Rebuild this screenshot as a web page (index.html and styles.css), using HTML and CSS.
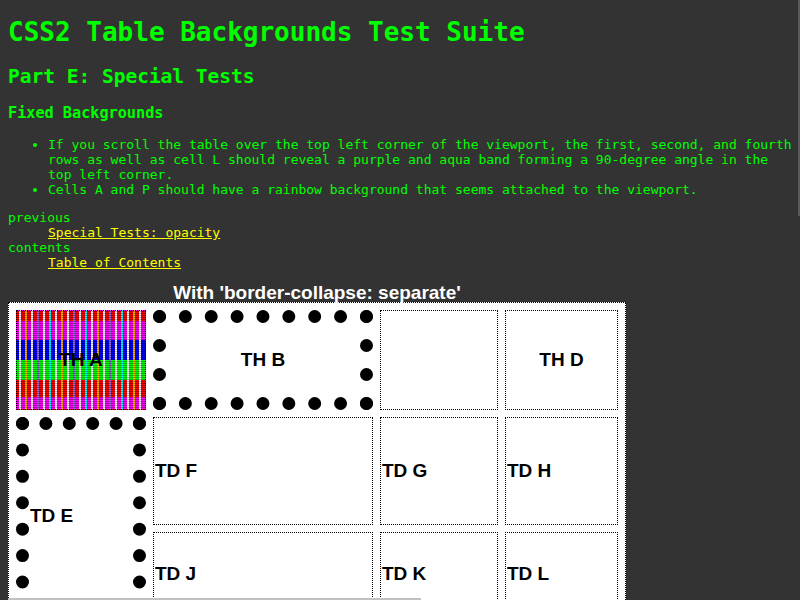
FILE: index.html
```html
<!DOCTYPE html>
<html>
<head>
<meta charset="utf-8">
<title>CSS2 Table Backgrounds Test Suite: Part E</title>
<link rel="stylesheet" href="styles.css">
</head>
<body>
<h1>CSS2 Table Backgrounds Test Suite</h1>
<h2>Part E: Special Tests</h2>
<h3>Fixed Backgrounds</h3>
<ul>
<li>If you scroll the table over the top left corner of the viewport, the first, second, and fourth rows as well as cell L should reveal a purple and aqua band forming a 90-degree angle in the top left corner.</li>
<li>Cells A and P should have a rainbow background that seems attached to the viewport.</li>
</ul>
<dl>
<dt>previous</dt>
<dd><a href="#">Special Tests: opacity</a></dd>
<dt>contents</dt>
<dd><a href="#">Table of Contents</a></dd>
</dl>
<table class="test">
<caption>With 'border-collapse: separate'</caption>
<tr class="r1">
<th class="a rainbow">TH A</th>
<th class="b thick">TH B</th>
<th class="c"></th>
<th class="d">TH D</th>
</tr>
<tr class="r2">
<td class="e thick" rowspan="2">TD E</td>
<td>TD F</td>
<td>TD G</td>
<td>TD H</td>
</tr>
<tr class="r3">
<td>TD J</td>
<td>TD K</td>
<td>TD L</td>
</tr>
<tr class="r4">
<td>TD M</td>
<td>TD N</td>
<td>TD O</td>
<td class="rainbow">TD P</td>
</tr>
</table>
<div class="vscroll"></div>
<div class="hscroll"></div>
</body>
</html>
```
FILE: styles.css
```css
html {
  overflow: hidden;
  background: #333333;
}
body {
  margin: 0 8px 8px;
  padding: 0;
  background: #333333;
  color: #00ff00;
  font-family: "DejaVu Sans Mono", monospace;
  font-size: 13px;
}
h1 { font-size: 26px; margin: 17px 0 18px; }
h2 { font-size: 19.5px; margin: 16px 0; }
h3 { font-size: 15.2px; margin: 15px 0; }
ul { margin: 13px 0; padding-left: 40px; }
dl { margin: 13px 0; }
dd { margin-left: 40px; }
a { color: #ffff00; text-decoration: underline; }

table.test {
  background: #ffffff;
  border: 1px dotted #000000;
  border-spacing: 7px;
  font-family: "Liberation Sans", Arial, sans-serif;
  font-size: 19px;
  font-weight: bold;
  color: #000000;
}
table.test caption {
  color: #ffffff;
  font-weight: bold;
  line-height: 19px;
}
table.test th,
table.test td {
  box-sizing: border-box;
  border: 1px dotted #000000;
  padding: 1px;
}
table.test td { text-align: left; }
table.test .thick { border: 13px dotted #000000; }
.r1 { height: 100px; }
.r2 { height: 108px; }
.r3 { height: 83px; }
.r4 { height: 100px; }
.a { width: 130px; }
.b { width: 220px; }
.c { width: 118px; }
.d { width: 113px; }
.rainbow {
  background:
    repeating-linear-gradient(to bottom, rgba(0,0,0,0.3) 0 1px, transparent 1px 2px),
    repeating-linear-gradient(to right,
      transparent 0 2px, #ffffff 2px 4px,
      transparent 4px 8px, #ffb000 8px 10px,
      transparent 10px 14px, #ffffff 14px 16px,
      transparent 16px 20px, #8c6cd0 20px 22px,
      transparent 22px 26px, #ffffff 26px 28px,
      transparent 28px 32px, #00ffff 32px 34px,
      transparent 34px 36px),
    linear-gradient(to bottom,
      #ff0000 0 10%, #ff00ff 10% 30%, #0000ff 30% 50%,
      #00ff00 50% 70%, #ff0000 70% 88%, #ff00ff 88% 100%);
}
.vscroll {
  position: fixed;
  right: 0;
  top: 0;
  width: 2px;
  height: 216px;
  background: #5a5a5a;
}
.hscroll {
  position: fixed;
  left: 8px;
  bottom: 0;
  width: 413px;
  height: 2px;
  background: #c0c0c0;
}
```
